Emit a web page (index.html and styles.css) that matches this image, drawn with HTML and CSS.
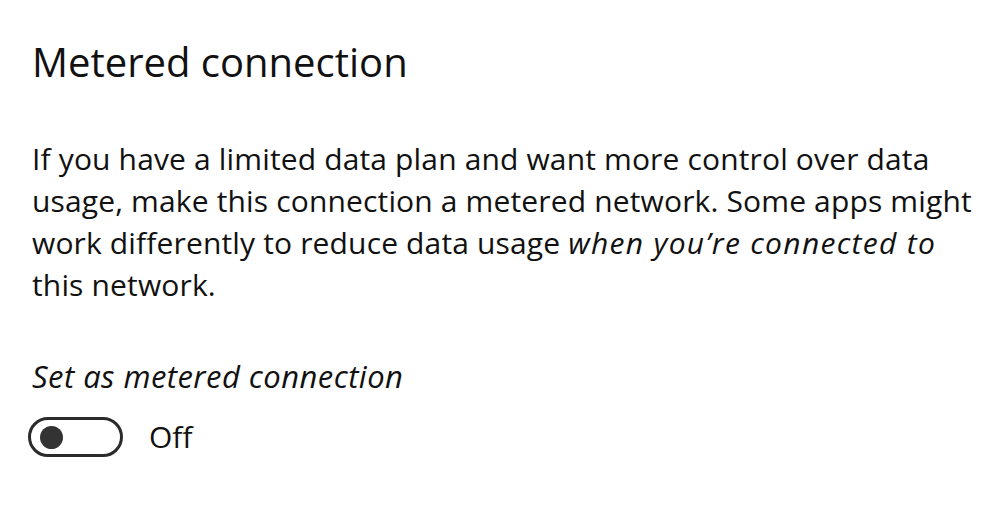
FILE: index.html
```html
<!DOCTYPE html>
<html lang="en">
<head>
<meta charset="utf-8">
<title>Metered connection</title>
<link rel="stylesheet" href="styles.css">
</head>
<body>
<main class="panel">
  <h1 class="title">Metered connection</h1>
  <p class="desc">If you have a limited data plan and want more control over data<br>usage, make this connection a metered network. Some apps might<br>work differently to reduce data usage <em>when you’re connected to</em><br>this network.</p>
  <div class="setting">
    <div class="setting-label">Set as metered connection</div>
    <div class="toggle-row">
      <span class="toggle"><span class="knob"></span></span>
      <span class="toggle-state">Off</span>
    </div>
  </div>
</main>
</body>
</html>
```
FILE: styles.css
```css
html, body {
  margin: 0;
  padding: 0;
  background: #ffffff;
}
body {
  width: 1000px;
  height: 520px;
  overflow: hidden;
  font-family: "Open Sans", "Noto Sans", sans-serif;
  color: #111;
}
.panel {
  padding: 34px 0 0 32px;
}
.title {
  margin: 0;
  font-size: 40px;
  font-weight: 400;
  line-height: 56px;
}
.desc {
  margin: 48px 0 0 0;
  font-size: 30px;
  line-height: 42px;
  letter-spacing: 0.15px;
}
.desc em {
  font-style: italic;
  letter-spacing: 1.3px;
}
.setting {
  margin-top: 50px;
}
.setting-label {
  font-size: 31px;
  font-style: italic;
  line-height: 40px;
  letter-spacing: 0.45px;
}
.toggle-row {
  margin-top: 21px;
  display: flex;
  align-items: center;
  gap: 26px;
  margin-left: -4px;
}
.toggle {
  box-sizing: border-box;
  width: 95px;
  height: 40px;
  border: 3px solid #2b2b2b;
  border-radius: 20px;
  display: flex;
  align-items: center;
  padding-left: 9px;
}
.knob {
  width: 23px;
  height: 23px;
  border-radius: 50%;
  background: #333;
}
.toggle-state {
  font-size: 30px;
  line-height: 40px;
}
```
